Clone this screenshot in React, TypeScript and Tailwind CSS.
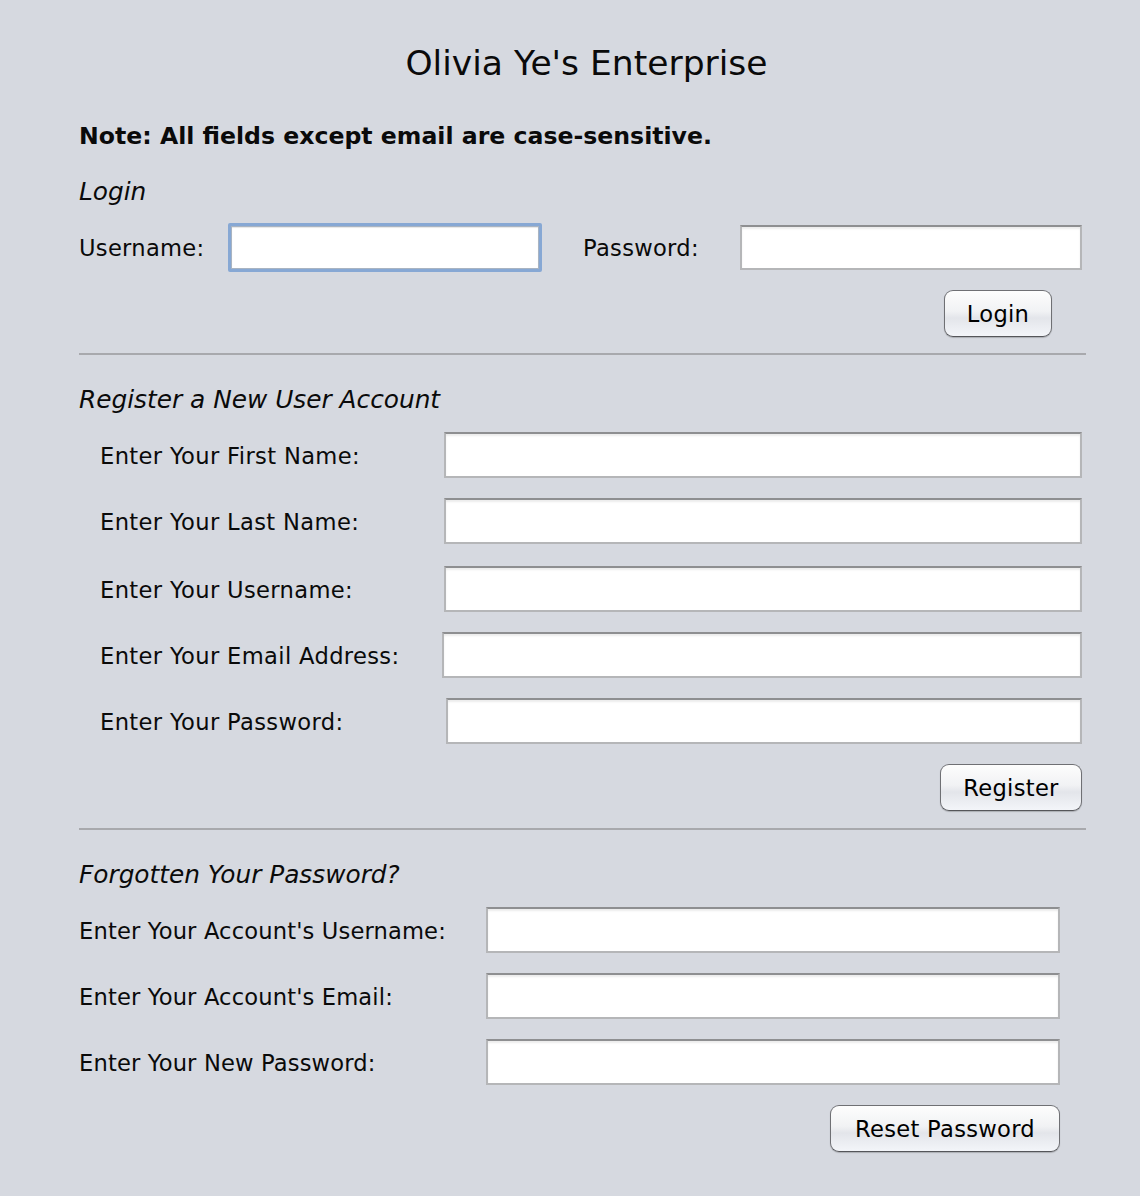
import React from "react";

const FONT = "font-['DejaVu_Sans','Liberation_Sans',sans-serif]";

function TextBox({ width, height = 46 }: { width: number; height?: number }) {
  return (
    <div
      className="shrink-0 bg-white border-2 border-[#b5b6b8] border-t-[#8e8f91] shadow-[inset_0_2px_2px_rgba(0,0,0,0.08)]"
      style={{ width, height }}
    />
  );
}

function FocusedBox({ width }: { width: number }) {
  return (
    <div
      className="shrink-0 h-[49px] p-[3px] bg-[#87a8d4] rounded-[2px]"
      style={{ width }}
    >
      <div className="w-full h-full bg-white border border-[#a9b4c2] shadow-[inset_0_1px_1px_rgba(0,0,0,0.1)]" />
    </div>
  );
}

function AquaButton({ label, width }: { label: string; width: number }) {
  return (
    <div
      className="h-[47px] flex items-center justify-center pt-[2px] rounded-[9px] border-[1.5px] border-[#6f7074] border-b-[#55565a] bg-[linear-gradient(to_bottom,#fdfdfd_0%,#f1f2f4_45%,#e3e5ea_60%,#f3f5f9_100%)] shadow-[0_1px_1px_rgba(0,0,0,0.2)] text-[22.6px] tracking-[0.3px] text-black leading-none"
      style={{ width }}
    >
      {label}
    </div>
  );
}

function Separator({ mt }: { mt: string }) {
  return <div className={`${mt} h-[2px] bg-[#a8a9ad]`} />;
}

const REGISTER_ROWS = [
  { label: "Enter Your First Name:", left: 444, mt: "mt-[16px]" },
  { label: "Enter Your Last Name:", left: 444, mt: "mt-[20px]" },
  { label: "Enter Your Username:", left: 444, mt: "mt-[22px]" },
  { label: "Enter Your Email Address:", left: 442, mt: "mt-[20px]" },
  { label: "Enter Your Password:", left: 446, mt: "mt-[20px]" },
];

const RESET_ROWS = [
  { label: "Enter Your Account's Username:", mt: "mt-[16px]" },
  { label: "Enter Your Account's Email:", mt: "mt-[20px]" },
  { label: "Enter Your New Password:", mt: "mt-[20px]" },
];

export default function App() {
  return (
    <div className={`w-[1140px] min-h-[1196px] bg-[#d6d9e0] text-[#0a0a0a] ${FONT}`}>
      <div className="ml-[79px] w-[1007px] pt-[40px]">
        {/* Title */}
        <div className="h-[46px] leading-[46px] text-[34.5px] text-center pl-[8px]">
          Olivia Ye's Enterprise
        </div>

        <div className="mt-[34px] h-[32px] leading-[32px] text-[23.6px] font-bold">
          Note: All fields except email are case-sensitive.
        </div>

        {/* Login */}
        <div className="mt-[24px] h-[32px] leading-[32px] text-[24.8px] italic">Login</div>
        <div className="mt-[14px] flex items-center h-[50px] text-[22.6px] tracking-[0.3px]">
          <div className="w-[149px] shrink-0 pt-[4px]">Username:</div>
          <FocusedBox width={314} />
          <div className="ml-[41px] w-[157px] shrink-0 pt-[4px]">Password:</div>
          <TextBox width={342} height={45} />
        </div>
        <div className="mt-[18px] flex justify-end pr-[34px]">
          <AquaButton label="Login" width={108} />
        </div>

        <Separator mt="mt-[16px]" />

        {/* Register */}
        <div className="mt-[29px] h-[32px] leading-[32px] text-[24.8px] italic">
          Register a New User Account
        </div>
        {REGISTER_ROWS.map((r) => (
          <div
            key={r.label}
            className={`${r.mt} flex items-center h-[46px] text-[22.6px] tracking-[0.35px]`}
          >
            <div className="shrink-0 pl-[21px] pt-[4px]" style={{ width: r.left - 79 }}>
              {r.label}
            </div>
            <TextBox width={1082 - r.left} />
          </div>
        ))}
        <div className="mt-[20px] flex justify-end pr-[4px]">
          <AquaButton label="Register" width={142} />
        </div>

        <Separator mt="mt-[17px]" />

        {/* Reset */}
        <div className="mt-[29px] h-[32px] leading-[32px] text-[24.8px] italic">
          Forgotten Your Password?
        </div>
        {RESET_ROWS.map((r) => (
          <div
            key={r.label}
            className={`${r.mt} flex items-center h-[46px] text-[22.6px] tracking-[0.15px]`}
          >
            <div className="w-[407px] shrink-0 pt-[4px]">{r.label}</div>
            <TextBox width={574} />
          </div>
        ))}
        <div className="mt-[20px] flex justify-end pr-[26px]">
          <AquaButton label="Reset Password" width={230} />
        </div>
      </div>
    </div>
  );
}
